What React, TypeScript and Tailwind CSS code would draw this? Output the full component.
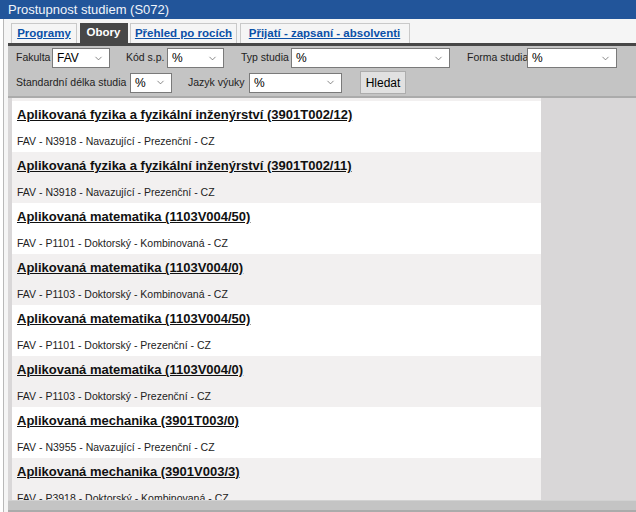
import { ChevronDown } from 'lucide-react';

const rows = [
  { t: 'Aplikovaná fyzika a fyzikální inženýrství (3901T002/12)', d: 'FAV - N3918 - Navazující - Prezenční - CZ' },
  { t: 'Aplikovaná fyzika a fyzikální inženýrství (3901T002/11)', d: 'FAV - N3918 - Navazující - Prezenční - CZ' },
  { t: 'Aplikovaná matematika (1103V004/50)', d: 'FAV - P1101 - Doktorský - Kombinovaná - CZ' },
  { t: 'Aplikovaná matematika (1103V004/0)', d: 'FAV - P1103 - Doktorský - Kombinovaná - CZ' },
  { t: 'Aplikovaná matematika (1103V004/50)', d: 'FAV - P1101 - Doktorský - Prezenční - CZ' },
  { t: 'Aplikovaná matematika (1103V004/0)', d: 'FAV - P1103 - Doktorský - Prezenční - CZ' },
  { t: 'Aplikovaná mechanika (3901T003/0)', d: 'FAV - N3955 - Navazující - Prezenční - CZ' },
  { t: 'Aplikovaná mechanika (3901V003/3)', d: 'FAV - P3918 - Doktorský - Kombinovaná - CZ' },
];

const tabs = [
  { t: 'Programy', w: 'w-[66px]' },
  { t: 'Obory', w: 'w-[48px]' },
  { t: 'Přehled po rocích', w: 'w-[107px]' },
  { t: 'Přijatí - zapsaní - absolventi', w: 'w-[170px]' },
];

function Select({ value, w }: { value: string; w: string }) {
  return (
    <div className={`${w} shrink-0 h-[20px] bg-white border border-[#7a7a7a] flex items-center justify-between pl-[4px] pr-[5px] text-[12px] text-black`}>
      <span>{value}</span>
      <ChevronDown className="w-[11px] h-[11px] text-[#555]" strokeWidth={1.5} />
    </div>
  );
}

export default function App() {
  return (
    <div className="w-[636px] h-[512px] overflow-hidden bg-white flex flex-col font-['Liberation_Sans',Arial,sans-serif]">
      <div className="h-[19px] shrink-0 bg-[#22559a] text-[#f0f4fa] text-[13px] leading-[19px] pl-[8px]">
        Prostupnost studiem (S072)
      </div>
      <div className="flex-1 flex min-h-0 pl-[3px]">
        <div className="flex-1 flex flex-col min-h-0 border-l border-[#b8b8b8] bg-[#f5f5f5] pl-[4px]">
          <div className="h-[24px] shrink-0 flex items-end pl-[3px] gap-[2.5px]">
            {tabs.map(({ t, w }) => (
              <div
                key={t}
                className={
                  t === 'Obory'
                    ? `${w} h-[20px] flex items-center justify-center bg-[#474747] text-white text-[11.5px] font-bold whitespace-nowrap`
                    : `${w} h-[20px] flex items-center justify-center border border-b-0 border-[#c9c9c9] bg-[#f5f5f5] text-[#0b50a8] text-[11.5px] font-bold underline whitespace-nowrap`
                }
              >
                {t}
              </div>
            ))}
          </div>
          <div className="h-[3px] shrink-0 bg-[#474747]" />
          <div className="shrink-0 bg-[#c4c4c4] border-b-2 border-[#ababab] px-[8px] pt-[2px] pb-[3px] text-[10.5px] text-[#222] flex flex-col gap-[4px] whitespace-nowrap">
            <div className="flex items-center h-[20px]">
              <span className="w-[36px] shrink-0">Fakulta</span>
              <Select value="FAV" w="w-[58px]" />
              <span className="ml-[16px] w-[41px] shrink-0">Kód s.p.</span>
              <Select value="%" w="w-[57px]" />
              <span className="ml-[17px] w-[50px] shrink-0">Typ studia</span>
              <Select value="%" w="w-[159px]" />
              <span className="ml-[17px] w-[60px] shrink-0">Forma studia</span>
              <Select value="%" w="w-[90px]" />
            </div>
            <div className="flex items-center h-[21px]">
              <span className="w-[114px] shrink-0">Standardní délka studia</span>
              <Select value="%" w="w-[42px]" />
              <span className="ml-[16px] w-[61px] shrink-0">Jazyk výuky</span>
              <Select value="%" w="w-[93px]" />
              <div className="ml-[18px] h-[23px] w-[46px] shrink-0 bg-[#e1e1e1] border border-[#adadad] flex items-center justify-center text-[12px] text-black">
                Hledat
              </div>
            </div>
          </div>
          <div className="flex-1 min-h-0 flex bg-[#d9d7d8] pl-[4px]">
            <div className="w-[529px] bg-[#f2f0f0] pt-[3px] overflow-hidden">
              {rows.map((r, i) => (
                <div key={i} className={`h-[51px] pl-[5px] pt-[5px] ${i % 2 === 0 ? 'bg-white' : 'bg-[#f2f0f0]'}`}>
                  <div className="text-[13px] font-bold underline text-[#111] leading-[18px] whitespace-nowrap">{r.t}</div>
                  <div className="text-[10.5px] text-[#222] mt-[8px] leading-[18px] whitespace-nowrap">{r.d}</div>
                </div>
              ))}
            </div>
          </div>
          <div className="h-[12px] shrink-0 bg-[#c4c4c4] border-t border-[#d2d2d2] border-b-2 border-b-[#ababab]" />
        </div>
      </div>
    </div>
  );
}
